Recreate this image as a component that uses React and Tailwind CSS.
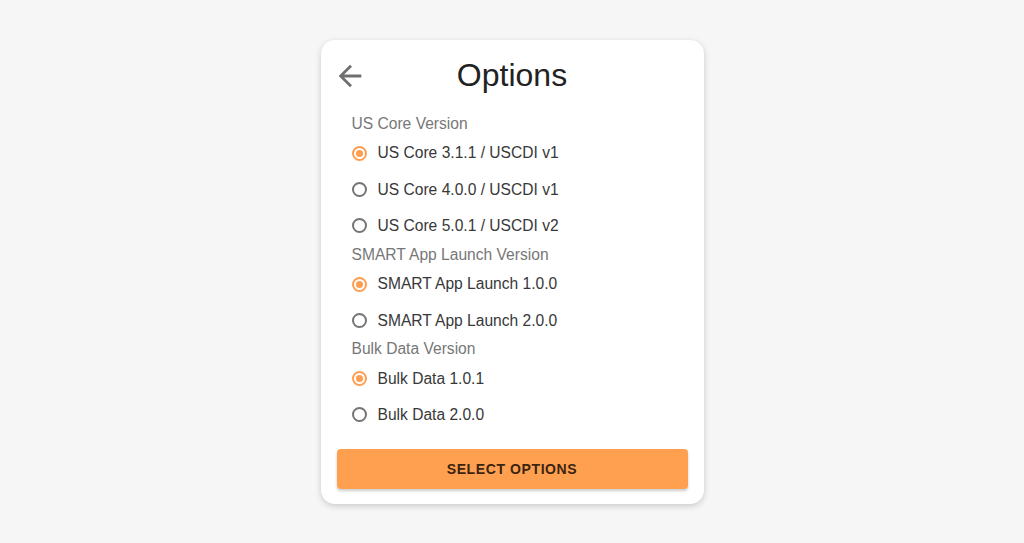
import React, { useState } from 'react';

const groups = [
  {
    key: 'uscore',
    label: 'US Core Version',
    options: ['US Core 3.1.1 / USCDI v1', 'US Core 4.0.0 / USCDI v1', 'US Core 5.0.1 / USCDI v2'],
  },
  {
    key: 'smart',
    label: 'SMART App Launch Version',
    options: ['SMART App Launch 1.0.0', 'SMART App Launch 2.0.0'],
  },
  {
    key: 'bulk',
    label: 'Bulk Data Version',
    options: ['Bulk Data 1.0.1', 'Bulk Data 2.0.0'],
  },
];

const Radio = ({ checked }) => (
  <span
    className={
      checked
        ? 'w-[15px] h-[15px] rounded-full border-2 border-[#ff9e50] flex items-center justify-center'
        : 'w-[15px] h-[15px] rounded-full border-2 border-[#757575] flex items-center justify-center'
    }
  >
    {checked && <span className="w-[7px] h-[7px] rounded-full bg-[#ff9e50]" />}
  </span>
);

const App = () => {
  const [selected, setSelected] = useState({
    uscore: groups[0].options[0],
    smart: groups[1].options[0],
    bulk: groups[2].options[0],
  });

  return (
    <div
      className="w-full h-[543px] bg-[#f6f6f6] flex justify-center pt-[40px]"
      style={{ fontFamily: '"Liberation Sans", Arial, sans-serif' }}
    >
      <div className="relative w-[383px] h-[464px] bg-white rounded-[14px] shadow-[0_2px_6px_rgba(0,0,0,0.18)] flex flex-col">
        {/* header */}
        <button className="absolute left-[12px] top-[19px] text-[#707070]">
          <svg width="34" height="34" viewBox="0 0 24 24" fill="currentColor">
            <path d="M20 11H7.83l5.59-5.59L12 4l-8 8 8 8 1.41-1.41L7.83 13H20v-2z" />
          </svg>
        </button>
        <div className="h-[73px] flex items-center justify-center">
          <h1 className="text-[32px] text-[#222] leading-none mb-[4px]">Options</h1>
        </div>

        {/* option groups */}
        <div className="px-[31px] flex flex-col">
          {groups.map(group => (
            <div key={group.key} className="flex flex-col">
              <div className="text-[15.6px] text-[#777] h-[22px] leading-[22px]">{group.label}</div>
              {group.options.map(opt => (
                <label
                  key={opt}
                  className="flex items-center gap-[11px] h-[36.3px] cursor-pointer"
                  onClick={() => setSelected(prev => ({ ...prev, [group.key]: opt }))}
                >
                  <Radio checked={selected[group.key] === opt} />
                  <span className="text-[15.6px] text-[#383838]">{opt}</span>
                </label>
              ))}
            </div>
          ))}
        </div>

        {/* action */}
        <div className="px-4 mt-[16px]">
          <button className="h-[40px] w-full rounded-[4px] bg-[#ffa050] shadow-[0_2px_3px_rgba(0,0,0,0.2)] text-[14px] font-bold tracking-[0.6px] text-[#3b2410]">
            SELECT OPTIONS
          </button>
        </div>
      </div>
    </div>
  );
};

export default App;
